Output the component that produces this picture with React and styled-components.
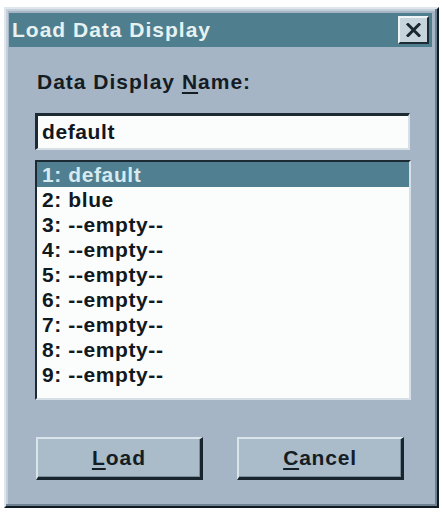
import React from "react";
import styled, { createGlobalStyle } from "styled-components";

const GlobalStyle = createGlobalStyle`
  html, body { margin: 0; padding: 0; background: #ffffff; }
  * { box-sizing: border-box; }
`;

const FONT = `"Liberation Sans", Arial, sans-serif`;

const Page = styled.div`
  padding: 7px 3px 4px 4px;
  font-family: ${FONT};
`;

const Window = styled.div`
  width: 435px;
  height: 501px;
  background: #a5b5c5;
  border-top: 2px solid #dfe7ec;
  border-left: 2px solid #dfe7ec;
  border-right: 2px solid #0f1b24;
  border-bottom: 2px solid #0f1b24;
  box-shadow: inset -2px -2px 0 #6f8191, inset 2px 2px 0 #c3d0da;
  padding: 4px 5px 3px 3px;
  display: flex;
  flex-direction: column;
`;

const TitleBar = styled.div`
  height: 34px;
  background: #4f7f8e;
  display: flex;
  align-items: center;
  justify-content: space-between;
  padding: 0 3px 0 3px;
`;

const TitleText = styled.span`
  color: #e6f1f2;
  font-size: 21px;
  font-weight: bold;
  letter-spacing: 1px;
  line-height: 24px;
`;

const CloseButton = styled.div`
  width: 31px;
  height: 28px;
  background: #c8d4dc;
  border-top: 2px solid #eef3f6;
  border-left: 2px solid #eef3f6;
  border-right: 2px solid #1c2a33;
  border-bottom: 2px solid #1c2a33;
  display: flex;
  align-items: center;
  justify-content: center;
`;

const Content = styled.div`
  display: flex;
  flex-direction: column;
  padding: 23px 0 0 26px;
  width: 402px;
`;

const Label = styled.div`
  font-size: 21px;
  font-weight: bold;
  letter-spacing: 1px;
  line-height: 24px;
  color: #141c24;
  padding-left: 2px;
`;

const Underline = styled.span`
  text-decoration: underline;
  text-decoration-thickness: 2px;
  text-underline-offset: 3px;
`;

const TextField = styled.div`
  margin-top: 19px;
  width: 375px;
  height: 37px;
  background: #fbfdfd;
  border-top: 3px solid #1c2a34;
  border-left: 3px solid #1c2a34;
  border-right: 2px solid #d6e0e6;
  border-bottom: 2px solid #d6e0e6;
  display: flex;
  align-items: center;
  padding-left: 4px;
  font-size: 21px;
  font-weight: bold;
  letter-spacing: 0.6px;
  color: #101820;
`;

const ListBox = styled.div`
  margin-top: 10px;
  width: 376px;
  height: 240px;
  background: #fbfdfd;
  border-top: 2px solid #1c2a34;
  border-left: 2px solid #1c2a34;
  border-right: 2px solid #d6e0e6;
  border-bottom: 2px solid #d6e0e6;
  display: flex;
  flex-direction: column;
`;

const ListRow = styled.div`
  height: 25px;
  display: flex;
  align-items: center;
  padding-left: 5px;
  font-size: 21px;
  font-weight: bold;
  letter-spacing: 0.6px;
  white-space: pre;
  background: ${(p) => (p.$selected ? "#4f7f90" : "transparent")};
  color: ${(p) => (p.$selected ? "#d6eaf0" : "#101820")};
`;

const ButtonRow = styled.div`
  margin-top: 37px;
  display: flex;
  gap: 34px;
  padding-left: 1px;
`;

const Button = styled.div`
  width: 167px;
  height: 43px;
  background: #aabbc9;
  border-top: 2px solid #dbe4ea;
  border-left: 2px solid #dbe4ea;
  border-right: 3px solid #18252e;
  border-bottom: 3px solid #18252e;
  box-shadow: inset -1px -1px 0 #7c8e9c;
  display: flex;
  align-items: center;
  justify-content: center;
  font-size: 21px;
  font-weight: bold;
  letter-spacing: ${(p) => p.$spacing || "1px"};
  color: #141c24;
`;

const items = [
  "default",
  "blue",
  "--empty--",
  "--empty--",
  "--empty--",
  "--empty--",
  "--empty--",
  "--empty--",
  "--empty--",
];

export default function App() {
  return (
    <>
      <GlobalStyle />
      <Page>
        <Window>
          <TitleBar>
            <TitleText>Load Data Display</TitleText>
            <CloseButton>
              <svg width="15" height="14" viewBox="0 0 15 14">
                <path
                  d="M2 1.5 L13 12.5 M13 1.5 L2 12.5"
                  stroke="#1a2630"
                  strokeWidth="3"
                  strokeLinecap="square"
                />
              </svg>
            </CloseButton>
          </TitleBar>
          <Content>
            <Label>
              Data Display <Underline>N</Underline>ame:
            </Label>
            <TextField>default</TextField>
            <ListBox>
              {items.map((t, i) => (
                <ListRow key={i} $selected={i === 0}>
                  {`${i + 1}: ${t}`}
                </ListRow>
              ))}
            </ListBox>
            <ButtonRow>
              <Button>
                <Underline>L</Underline>oad
              </Button>
              <Button $spacing="0.8px">
                <Underline>C</Underline>ancel
              </Button>
            </ButtonRow>
          </Content>
        </Window>
      </Page>
    </>
  );
}
